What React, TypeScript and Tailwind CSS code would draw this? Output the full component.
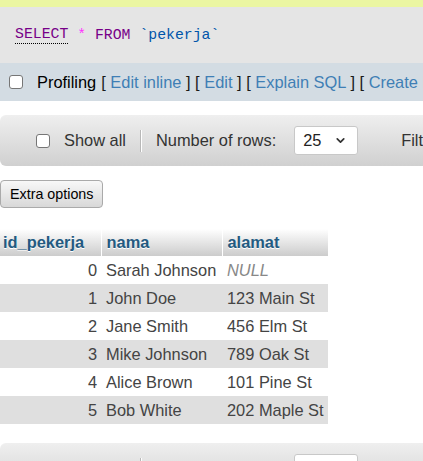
import { ChevronDown } from 'lucide-react';

const rows = [
  { id: 0, nama: 'Sarah Johnson', alamat: null },
  { id: 1, nama: 'John Doe', alamat: '123 Main St' },
  { id: 2, nama: 'Jane Smith', alamat: '456 Elm St' },
  { id: 3, nama: 'Mike Johnson', alamat: '789 Oak St' },
  { id: 4, nama: 'Alice Brown', alamat: '101 Pine St' },
  { id: 5, nama: 'Bob White', alamat: '202 Maple St' },
];

const Box = () => (
  <span className="inline-block w-[14px] h-[14px] shrink-0 rounded-[3px] border border-[#767676] bg-white" />
);

const Bracket = ({ children }: { children: string }) => (
  <span className="text-[#1a1a1a]">{children}</span>
);

const NavBar = () => (
  <div className="flex items-center h-[51px] rounded-l-[6px] bg-gradient-to-b from-[#efefef] to-[#d0d0d0] pl-[36px] whitespace-nowrap overflow-hidden">
    <Box />
    <span className="ml-[14px] shrink-0 text-[#333]">Show all</span>
    <span className="ml-[14px] shrink-0 w-[2px] h-[22px] bg-[#b8b8b8] border-r border-white" />
    <span className="ml-[14px] shrink-0 text-[#333]">Number of rows:</span>
    <div className="ml-[18px] shrink-0 flex items-center justify-between w-[64px] h-[29px] rounded-[3px] border border-[#c8c8c8] bg-white pl-[8px] pr-[10px]">
      <span className="text-[#222]">25</span>
      <ChevronDown className="w-[13px] h-[13px] text-[#333]" strokeWidth={3.2} />
    </div>
    <span className="ml-[43px] shrink-0 text-[#333]">Filter rows:</span>
  </div>
);

export default function App() {
  return (
    <div className="w-[423px] h-[461px] overflow-hidden bg-white font-['Liberation_Sans',Arial,sans-serif] text-[16.4px] leading-none">
      <div className="h-[7px] bg-[#ebf6a2]" />
      <div className="h-[56px] bg-[#e5e5e5] flex items-center pl-[15px] pt-[1px] font-['Liberation_Mono','DejaVu_Sans_Mono',monospace] text-[14.8px] whitespace-pre">
        <span className="text-[#770088] border-b border-dotted border-black pb-[1px]">SELECT</span>
        <span> </span>
        <span className="text-[#ff33ff]">*</span>
        <span> </span>
        <span className="text-[#770088]">FROM</span>
        <span> </span>
        <span className="text-[#0055aa]">`pekerja`</span>
      </div>
      <div className="h-[38px] bg-[#d3dce3] flex items-center pl-[9px] whitespace-nowrap overflow-hidden">
        <Box />
        <span className="ml-[14px] shrink-0 text-black">Profiling</span>
        <span className="ml-[5px] shrink-0">
          <Bracket>[</Bracket> <span className="text-[#3f7fb5]">Edit inline</span> <Bracket>]</Bracket>{' '}
          <Bracket>[</Bracket> <span className="text-[#3f7fb5]">Edit</span> <Bracket>]</Bracket>{' '}
          <Bracket>[</Bracket> <span className="text-[#3f7fb5]">Explain SQL</span> <Bracket>]</Bracket>{' '}
          <Bracket>[</Bracket> <span className="text-[#3f7fb5]">Create PHP code</span> <Bracket>]</Bracket>
        </span>
      </div>
      <div className="mt-[14px]">
        <NavBar />
      </div>
      <div className="mt-[14px]">
        <button className="h-[28px] px-[9px] rounded-[4px] border border-[#aaa] bg-gradient-to-b from-[#f8f8f8] to-[#d8d8d8] text-[14.3px] text-black">
          Extra options
        </button>
      </div>
      <table className="mt-[21px] border-collapse">
        <thead>
          <tr className="h-[27px] bg-gradient-to-b from-white to-[#cccccc]">
            <th className="w-[101px] text-left pl-[3px] font-bold text-[#235a81] border-r border-white [text-shadow:0_1px_0_#fff]">id_pekerja</th>
            <th className="w-[121px] text-left pl-[5px] font-bold text-[#235a81] border-r border-white [text-shadow:0_1px_0_#fff]">nama</th>
            <th className="w-[106px] text-left pl-[5px] font-bold text-[#235a81] [text-shadow:0_1px_0_#fff]">alamat</th>
          </tr>
        </thead>
        <tbody>
          {rows.map((r, i) => (
            <tr key={r.id} className={i % 2 === 1 ? 'h-[28px] bg-[#dfdfdf]' : 'h-[28px] bg-white'}>
              <td className="text-right pr-[4px] text-[#444]">{r.id}</td>
              <td className="pl-[5px] text-[#444] whitespace-nowrap">{r.nama}</td>
              <td className="pl-[5px] text-[#444] whitespace-nowrap">
                {r.alamat ?? <span className="italic text-[#888]">NULL</span>}
              </td>
            </tr>
          ))}
        </tbody>
      </table>
      <div className="mt-[19px]">
        <NavBar />
      </div>
    </div>
  );
}
